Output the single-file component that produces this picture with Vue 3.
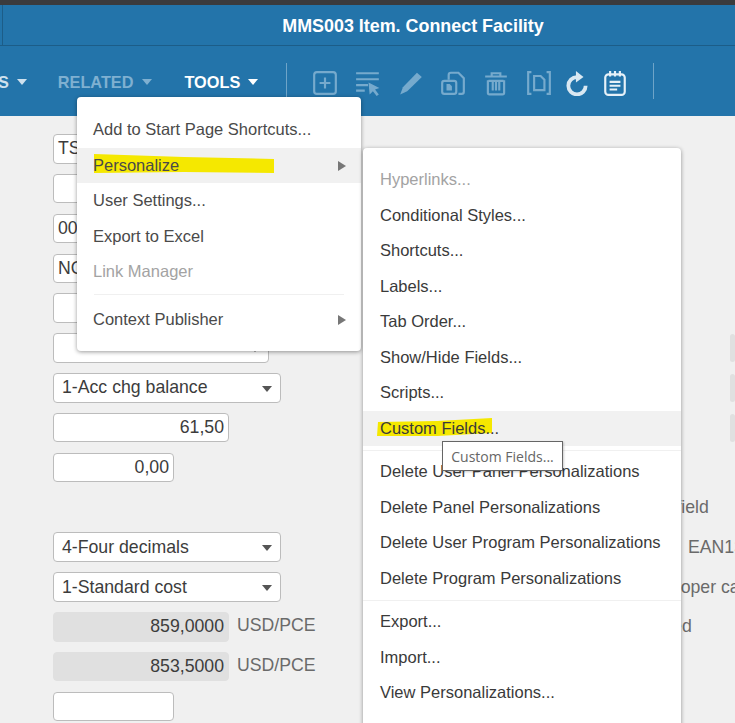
<script setup>
const formRows = [
  { type: 'input', width: 'wide', text: 'TS' },
  { type: 'input', width: 'wide', text: '' },
  { type: 'input', width: 'wide', text: '00' },
  { type: 'input', width: 'wide', text: 'NO' },
  { type: 'input', width: 'wide', text: '' },
  { type: 'select', width: 'mid', text: '' },
  { type: 'select', width: 'full', text: '1-Acc chg balance' },
  { type: 'number', width: 'half', text: '61,50' },
  { type: 'number', width: 'small', text: '0,00' },
  { type: 'blank' },
  { type: 'select', width: 'full', text: '4-Four decimals' },
  { type: 'select', width: 'full', text: '1-Standard cost' },
  { type: 'readonly', width: 'half', text: '859,0000', unit: 'USD/PCE' },
  { type: 'readonly', width: 'half', text: '853,5000', unit: 'USD/PCE' },
  { type: 'input', width: 'small', text: '' }
]

const sideRows = [
  {}, {}, {}, {}, {},
  { stub: true },
  { stub: true },
  { stub: true },
  {},
  { text: 'Text field', cls: 's-field' },
  { text: 'EAN13', cls: 's-ean' },
  { text: 'Proper case', cls: 's-proper' },
  { text: 'Required', cls: 's-req' }
]

const toolsMenu = [
  { label: 'Add to Start Page Shortcuts...' },
  { label: 'Personalize', active: true, arrow: true },
  { label: 'User Settings...' },
  { label: 'Export to Excel' },
  { label: 'Link Manager', disabled: true },
  { divider: true },
  { label: 'Context Publisher', arrow: true }
]

const personalizeMenu = [
  { label: 'Hyperlinks...', disabled: true },
  { label: 'Conditional Styles...' },
  { label: 'Shortcuts...' },
  { label: 'Labels...' },
  { label: 'Tab Order...' },
  { label: 'Show/Hide Fields...' },
  { label: 'Scripts...' },
  { label: 'Custom Fields...', active: true },
  { divider: true },
  { label: 'Delete User Panel Personalizations' },
  { label: 'Delete Panel Personalizations' },
  { label: 'Delete User Program Personalizations' },
  { label: 'Delete Program Personalizations' },
  { divider: true },
  { label: 'Export...' },
  { label: 'Import...' },
  { label: 'View Personalizations...' }
]
</script>

<template>
  <div class="page">
    <div class="top-strip"></div>
    <header class="title-bar">
      <span class="title">MMS003 Item. Connect Facility</span>
    </header>

    <nav class="toolbar">
      <span class="nav-item first">ACTIONS<i class="nav-caret"></i></span>
      <span class="nav-item muted">RELATED<i class="nav-caret"></i></span>
      <span class="nav-item">TOOLS<i class="nav-caret"></i></span>
      <span class="tb-divider"></span>
      <div class="icons">
        <svg class="icon" viewBox="0 0 24 24"><rect x="2" y="2" width="20" height="20" rx="2.5" /><path d="M12 7v10M7 12h10" /></svg>
        <svg class="icon" viewBox="0 0 24 24"><path d="M1 3h21M1 8.500h21M1 14h11M1 19h8" /><path class="solid" d="M12.500 11.500l10 5-4 1.500 3.500 4.500-2 1.500-3.500-4.500-3 3z" /></svg>
        <svg class="icon" viewBox="0 0 24 24"><path class="solid" d="M17.500 2.500l4.500 4-13.500 13-6.500 3 2.500-6.500z" /></svg>
        <svg class="icon" viewBox="0 0 24 24"><path d="M8 9V4.500a2 2 0 0 1 2-2h7l5 5V20a2 2 0 0 1-2 2h-3" /><rect x="2" y="10" width="13" height="12" rx="2" /><path class="solid" d="M6 13h3l2 2v4H6z" /></svg>
        <svg class="icon" viewBox="0 0 24 24"><path d="M2 6h20M8 6V3h8v3M4.500 9.500V21a1.500 1.500 0 0 0 1.500 1.500h12a1.500 1.500 0 0 0 1.500-1.500V9.500M9 11v8M12 11v8M15 11v8M5 10h14" /></svg>
        <svg class="icon" viewBox="0 0 24 24"><path d="M5 2H2v20h3M19 2h3v20h-3" /><path d="M7.500 5.500h6l3.500 3.500v9.500H7.500z" /></svg>
        <svg class="icon bright" viewBox="0 0 24 24"><path class="thick" d="M12 6.500a8 8 0 1 0 8 8" /><path class="solid" d="M11 1l7 5.500-7 5z" /></svg>
        <svg class="icon white" viewBox="0 0 24 24"><rect x="3" y="4" width="18" height="19" rx="3" /><path d="M7.500 1v5M12 1v5M16.500 1v5M7 11h10M7 14.500h10M7 18h7" /></svg>
      </div>
      <span class="tb-divider"></span>
    </nav>

    <main class="content">
      <div class="form-col">
        <div v-for="(row, i) in formRows" :key="i" class="form-row">
          <template v-if="row.type !== 'blank'">
            <div class="field" :class="[row.type, row.width]">
              <span>{{ row.text }}</span>
              <i v-if="row.type === 'select'" class="select-caret"></i>
            </div>
            <span v-if="row.unit" class="unit">{{ row.unit }}</span>
          </template>
        </div>
      </div>
      <div class="side-col">
        <div v-for="(row, i) in sideRows" :key="i" class="form-row">
          <div v-if="row.stub" class="stub"></div>
          <span v-if="row.text" class="side-label" :class="row.cls">{{ row.text }}</span>
        </div>
      </div>
    </main>

    <div class="menu tools-menu">
      <template v-for="(item, i) in toolsMenu" :key="i">
        <div v-if="item.divider" class="menu-divider"></div>
        <div v-else class="menu-item" :class="{ active: item.active, disabled: item.disabled }">
          <svg v-if="item.active" class="marker marker-a" width="180" height="20" viewBox="0 0 180 20"><polygon points="0,0 90,3 180,5 180,19 90,18 0,19" /></svg>
          <span class="menu-label">{{ item.label }}</span>
          <i v-if="item.arrow" class="menu-arrow"></i>
        </div>
      </template>
    </div>

    <div class="menu personalize-menu">
      <template v-for="(item, i) in personalizeMenu" :key="i">
        <div v-if="item.divider" class="menu-divider"></div>
        <div v-else class="menu-item" :class="{ active: item.active, disabled: item.disabled }">
          <svg v-if="item.active" class="marker marker-b" width="116" height="19" viewBox="0 0 116 19"><polygon points="1,4 60,3 115,0 115,15 60,18 0,18" /></svg>
          <span class="menu-label">{{ item.label }}</span>
        </div>
      </template>
    </div>

    <div class="tooltip">Custom Fields...</div>
  </div>
</template>

<style>
html, body {
  margin: 0;
  overflow: hidden;
}
</style>

<style scoped>
.page {
  position: relative;
  width: 735px;
  height: 723px;
  overflow: hidden;
  background: #f0f0f0;
  font-family: "Liberation Sans", Arial, sans-serif;
}

.top-strip {
  height: 5px;
  background: #3b3b3d;
}

.title-bar {
  height: 41px;
  display: flex;
  align-items: center;
  justify-content: center;
  box-sizing: border-box;
  padding: 3px 0 0 91px;
  background: #2374aa;
  border-bottom: 1px solid #1c5d88;
  box-shadow: inset 2px 0 0 #2374aa, inset 3px 0 0 #1c5d88;
}

.title {
  color: #fff;
  font-size: 17.9px;
  font-weight: 700;
}

.toolbar {
  height: 70px;
  padding-top: 2px;
  box-sizing: border-box;
  display: flex;
  align-items: center;
  background: #2374aa;
  overflow: hidden;
  white-space: nowrap;
}

.nav-item {
  display: flex;
  align-items: center;
  color: #fff;
  font-size: 16.3px;
  font-weight: 700;
  margin-right: 32px;
}

.nav-item.first {
  margin-left: -64.5px;
  margin-right: 31px;
  color: #cfe1ee;
}

.nav-item.muted {
  color: #7fb0d1;
}

.nav-caret {
  width: 0;
  height: 0;
  margin-left: 8px;
  border-left: 5.5px solid transparent;
  border-right: 5.5px solid transparent;
  border-top: 6px solid currentColor;
}

.nav-item.muted .nav-caret {
  margin-left: 9px;
}

.tb-divider {
  flex: none;
  width: 1px;
  height: 36px;
  margin-top: -2px;
  background: #6ea4c8;
}

.nav-item + .tb-divider {
  margin-left: -4px;
}

.icons {
  display: flex;
  align-items: center;
  margin: 1px 25px 0 25px;
}

.icon {
  flex: none;
  width: 26px;
  height: 26px;
  margin-right: 16.700px;
  color: #76aacd;
  fill: none;
  stroke: #76aacd;
  stroke-width: 2;
}

.icon:nth-child(6) {
  margin-right: 12px;
}

.icon .solid {
  fill: currentColor;
  stroke: none;
}

.icon.bright {
  margin-right: 12px;
  color: #d9e8f2;
  stroke: #d9e8f2;
}

.icon.white {
  margin-right: 0;
  color: #e6f1f8;
  stroke: #e6f1f8;
}

.icon .thick {
  stroke-width: 3.5;
}

.content {
  display: flex;
}

.form-col {
  flex: none;
  width: 228px;
  margin-left: 53px;
  padding-top: 18px;
}

.side-col {
  flex: none;
  width: 115px;
  margin-left: 339px;
  padding-top: 18px;
}

.form-row {
  height: 29.5px;
  margin-bottom: 10.35px;
  display: flex;
  align-items: center;
  white-space: nowrap;
  font-size: 17.7px;
}

.field {
  position: relative;
  flex: none;
  height: 100%;
  box-sizing: border-box;
  display: flex;
  align-items: center;
  padding: 0 4px;
  background: #fff;
  border: 1px solid #bcbcbc;
  border-radius: 4px;
  color: #3c3c3c;
}

.field.wide {
  width: 175px;
}

.field.mid {
  width: 216px;
}

.field.full {
  width: 228px;
}

.field.half {
  width: 176px;
}

.field.small {
  width: 121px;
}

.field.select {
  padding-left: 8px;
}

.field.number,
.field.readonly {
  justify-content: flex-end;
}

.field.readonly {
  background: #e0e0e0;
  border-color: #e0e0e0;
}

.select-caret {
  position: absolute;
  right: 8px;
  top: 12px;
  width: 0;
  height: 0;
  border-left: 5.5px solid transparent;
  border-right: 5.5px solid transparent;
  border-top: 6px solid #555;
}

.unit {
  margin-left: 8px;
  margin-top: -3px;
  color: #6a6a6a;
}

.stub {
  width: 20px;
  height: 28px;
  margin-left: 110px;
  background: #e0e0e0;
  border-radius: 4px;
}

.side-label {
  color: #6a6a6a;
}

.s-field {
  margin-left: 19px;
}

.s-ean {
  margin-left: 68px;
}

.s-proper {
  margin-left: 43px;
  margin-top: 1px;
}

.menu {
  position: absolute;
  box-sizing: border-box;
  background: #fff;
  border-radius: 4px;
  box-shadow: 0 1px 4px rgba(0, 0, 0, 0.4);
  font-size: 16.5px;
  white-space: nowrap;
}

.tools-menu {
  left: 77px;
  top: 97px;
  width: 284px;
  height: 254px;
  padding-top: 15px;
  color: #4a4a4a;
}

.personalize-menu {
  left: 363px;
  top: 148px;
  width: 318px;
  height: 600px;
  padding-top: 14px;
  color: #3a3a3a;
}

.menu-item {
  position: relative;
  height: 35.5px;
  display: flex;
  align-items: center;
  padding-left: 17px;
}

.tools-menu .menu-item {
  padding-left: 16px;
}

.menu-item.active {
  background: #f1f1f1;
}

.menu-item.disabled {
  color: #a3a3a3;
}

.menu-label {
  position: relative;
}

.menu-divider {
  height: 1px;
  margin: 4px 17px 7px;
  background: #f0f0f0;
}

.personalize-menu .menu-divider {
  margin: 3.5px 0;
}

.menu-arrow {
  position: absolute;
  right: 15px;
  top: 13px;
  width: 0;
  height: 0;
  border-top: 5px solid transparent;
  border-bottom: 5px solid transparent;
  border-left: 8px solid #777;
}

.marker {
  position: absolute;
  fill: #f5e800;
}

.marker-a {
  left: 17px;
  top: 6px;
}

.marker-b {
  left: 14px;
  top: 7px;
}

.tooltip {
  position: absolute;
  left: 442px;
  top: 441px;
  width: 121px;
  height: 30px;
  box-sizing: border-box;
  display: flex;
  align-items: center;
  justify-content: center;
  background: #fff;
  border: 1px solid #666;
  box-shadow: 1px 1px 2px rgba(0, 0, 0, 0.2);
  color: #666;
  font-family: "Open Sans", sans-serif;
  font-size: 14px;
}
</style>
